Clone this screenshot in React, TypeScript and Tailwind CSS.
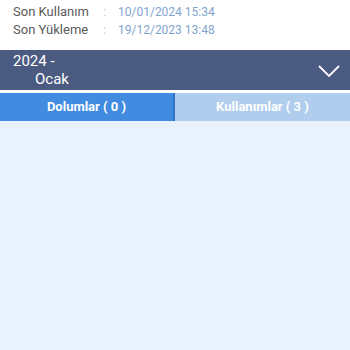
import React from "react";

export default function App() {
  return (
    <div className="w-[350px] h-[350px] bg-[#e8f1fc] overflow-hidden" style={{ fontFamily: "Roboto, 'Liberation Sans', sans-serif" }}>
      <div className="bg-white h-[50px] pl-[13px] pt-[3px] text-[13px] leading-[18px]">
        <div className="flex items-baseline">
          <span className="w-[90px] text-[#5a5a5a]">Son Kullanım</span>
          <span className="w-[15px] text-[#c0cad6]">:</span>
          <span className="text-[12px] text-[#82a5d0]">10/01/2024 15:34</span>
        </div>
        <div className="flex items-baseline">
          <span className="w-[90px] text-[#5a5a5a]">Son Yükleme</span>
          <span className="w-[15px] text-[#c0cad6]">:</span>
          <span className="text-[12px] text-[#82a5d0]">19/12/2023 13:48</span>
        </div>
      </div>
      <div className="bg-[#4b5a80] h-[40px] flex items-center justify-between pl-[13px] pr-[10px]">
        <div className="text-white text-[15px] leading-[18px]">
          <div>2024 -</div>
          <div className="pl-[22px]">Ocak</div>
        </div>
        <svg width="22" height="12" viewBox="0 0 22 12" className="mt-[1px]">
          <path d="M1 1 L11 11 L21 1" fill="none" stroke="white" strokeWidth="1.8" />
        </svg>
      </div>
      <div className="bg-white h-[3px]" />
      <div className="flex h-[28px] text-[13px] font-bold text-white">
        <div className="w-[175px] bg-[#418ce0] border-r-2 border-[#2f74c8] flex items-center justify-center">Dolumlar ( 0 )</div>
        <div className="flex-1 bg-[#b0cdee] flex items-center justify-center">Kullanımlar ( 3 )</div>
      </div>
    </div>
  );
}
